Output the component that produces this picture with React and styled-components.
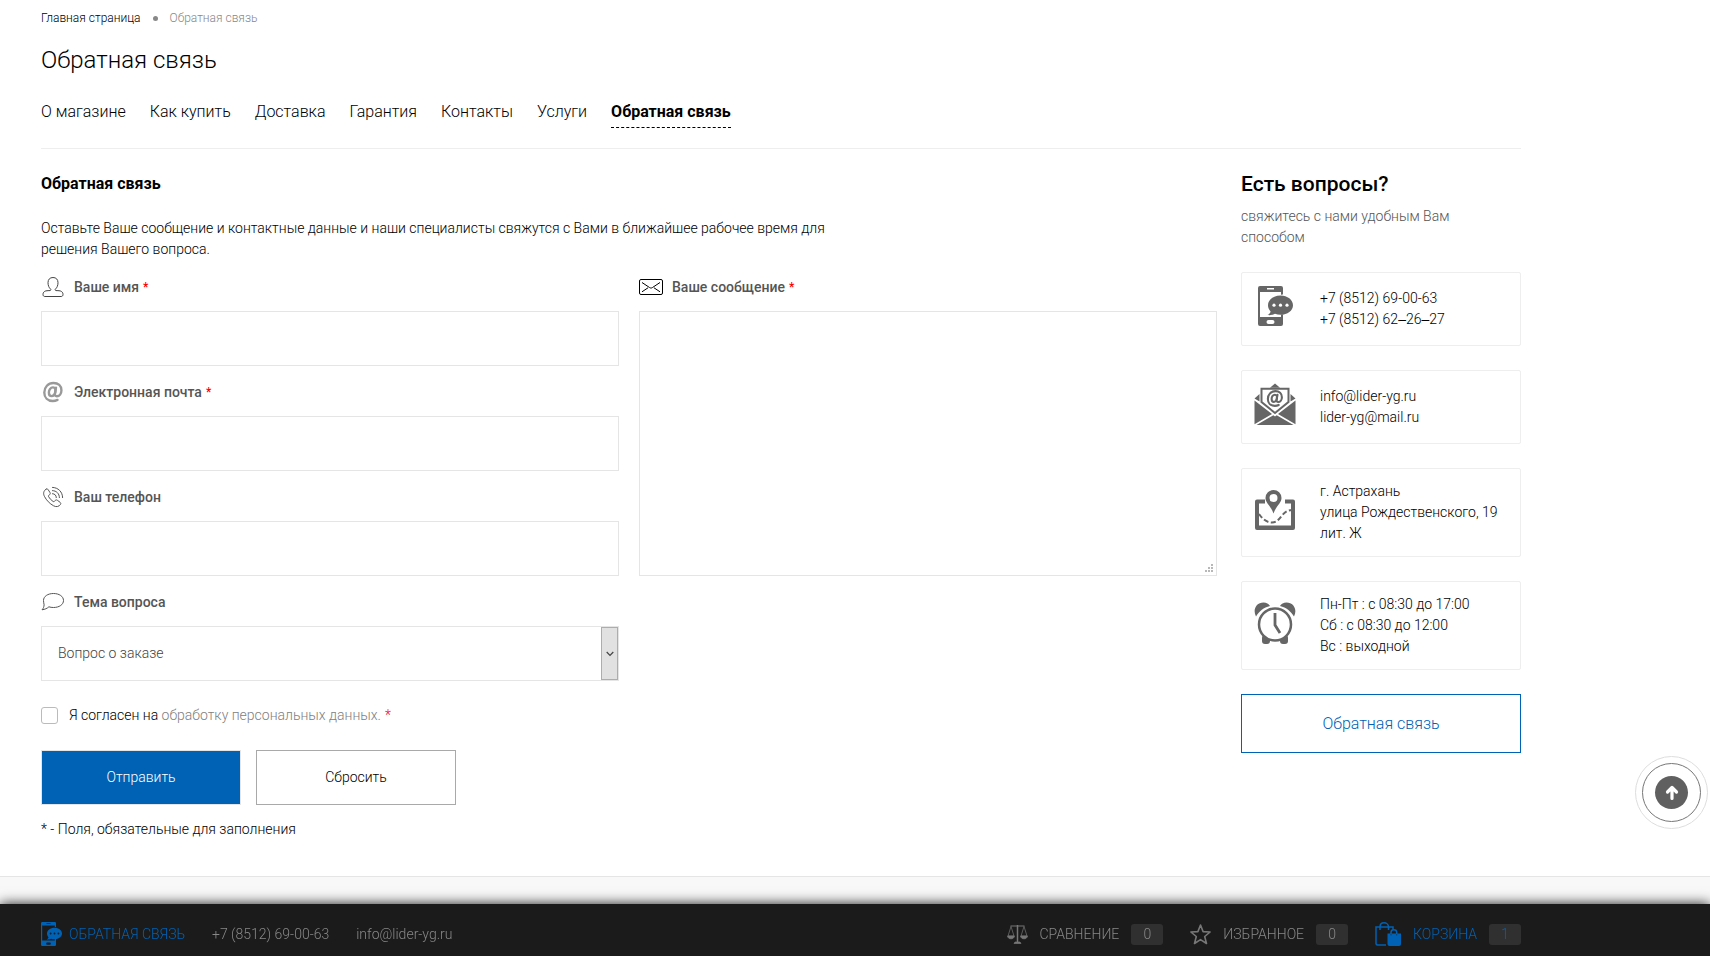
import React, { useState } from 'react';
import styled, { createGlobalStyle, css } from 'styled-components';

const BLUE = '#0062b5';
const GREY = '#666';

const GlobalStyle = createGlobalStyle`
    *, *::before, *::after {
        box-sizing: border-box;
    }

    body {
        margin: 0;
        background: #fff;
        color: #000;
        font-family: Roboto, 'Liberation Sans', sans-serif;
        font-size: 14px;
        font-weight: 300;
        line-height: 21px;
    }

    input, textarea, select, button {
        font: inherit;
    }

    a {
        color: inherit;
        text-decoration: none;
    }
`;

const Page = styled.div`
    display: flex;
    flex-flow: column nowrap;
    min-height: 100vh;
`;

const Container = styled.div`
    padding: 0 189px 0 41px;
`;

const Breadcrumbs = styled.nav`
    display: flex;
    align-items: center;
    gap: 12px;
    padding-top: 8px;
    font-size: 12px;
    line-height: 20px;
    color: #888;

    a {
        color: #000;
    }
`;

const Dot = styled.span`
    width: 5px;
    height: 5px;
    border-radius: 50%;
    background: #888;
`;

const PageTitle = styled.h1`
    margin: 16px 0 0;
    font-size: 24px;
    font-weight: 300;
    line-height: 32px;
`;

const Menu = styled.nav`
    display: flex;
    align-items: flex-start;
    gap: 24px;
    height: 49px;
    margin-top: 24px;
    border-bottom: 1px solid #eee;
    font-size: 16px;
    line-height: 24px;
`;

const MenuLink = styled.a`
    ${props => props.$active && css`
        padding-bottom: 3px;
        border-bottom: 1px dashed #000;
        font-weight: 700;
    `}
`;

const Columns = styled.div`
    display: grid;
    grid-template-columns: minmax(0, 1fr) 280px;
    gap: 24px;
    padding-top: 23px;
`;

const SectionTitle = styled.h2`
    margin: 0;
    font-size: 16px;
    font-weight: 700;
    line-height: 24px;
`;

const Intro = styled.p`
    max-width: 800px;
    margin: 22px 0 1px;
`;

const Form = styled.form`
    padding-bottom: 36px;
`;

const Fields = styled.div`
    display: grid;
    grid-template-columns: 1fr 1fr;
    gap: 20px;
    align-items: start;
`;

const FieldColumn = styled.div`
    display: flex;
    flex-flow: column nowrap;
`;

const FieldLabel = styled.label`
    display: flex;
    align-items: center;
    height: 50px;
    padding-top: 2px;
    font-weight: 500;
    color: #555;
`;

const LabelIcon = styled.span`
    display: flex;
    justify-content: center;
    width: 24px;
    margin-right: 9px;
`;

const Star = styled.span`
    margin-left: 4px;
    color: #f00;
    font-size: ${props => props.$small ? '12px' : 'inherit'};
`;

const inputLook = css`
    width: 100%;
    border: 1px solid #e5e5e5;
    border-radius: 0;
    background: #fff;
    color: #444;
    outline: none;
`;

const Input = styled.input`
    ${inputLook}
    height: 55px;
    padding: 0 16px;
`;

const Textarea = styled.textarea`
    ${inputLook}
    display: block;
    height: 265px;
    padding: 16px;
    resize: vertical;

    &::-webkit-resizer {
        background: url("data:image/svg+xml,%3Csvg xmlns='http://www.w3.org/2000/svg' width='15' height='15' fill='%23b8b8b8'%3E%3Cpath d='M4 10h2v2H4zM7 10h2v2H7zM10 10h2v2h-2zM7 7h2v2H7zM10 7h2v2h-2zM10 4h2v2h-2z'/%3E%3C/svg%3E") no-repeat;
    }
`;

const SelectBox = styled.div`
    display: grid;
    grid-template-columns: 1fr 17px;
    height: 55px;
    border: 1px solid #e5e5e5;
`;

const Select = styled.select`
    grid-area: 1 / 1 / 2 / 3;
    appearance: none;
    padding: 0 16px;
    border: 0;
    background: transparent;
    color: #444;
    outline: none;
`;

const SelectArrow = styled.span`
    grid-area: 1 / 2;
    display: flex;
    align-items: center;
    justify-content: center;
    border: 1px solid #adadad;
    background: #e1e1e1;
    pointer-events: none;
`;

const Agreement = styled.label`
    display: flex;
    align-items: center;
    margin-top: 24px;

    a {
        color: #808080;
    }
`;

const Checkbox = styled.input`
    appearance: none;
    width: 17px;
    height: 17px;
    margin: 0 11px 0 0;
    border: 1px solid #bbb;
    border-radius: 3px;
    background: #fff;

    &:checked {
        background: ${BLUE};
    }
`;

const Buttons = styled.div`
    display: flex;
    gap: 15px;
    margin-top: 24px;
`;

const Button = styled.button`
    width: 200px;
    height: 55px;
    border: 1px solid ${props => props.$primary ? '#e5e5e5' : '#a9a9a9'};
    background: ${props => props.$primary ? BLUE : '#fff'};
    color: ${props => props.$primary ? '#fff' : '#000'};
    cursor: pointer;
`;

const Note = styled.p`
    margin: 14px 0 0;
`;

const SideTitle = styled.h3`
    margin: 0;
    font-size: 21px;
    font-weight: 500;
    line-height: 24px;
`;

const SideText = styled.p`
    max-width: 240px;
    margin: 10px 0 24px;
    color: #555;
`;

const Cards = styled.div`
    display: flex;
    flex-flow: column nowrap;
    gap: 24px;
`;

const Card = styled.div`
    display: flex;
    align-items: center;
    min-height: 74px;
    padding: 12px 8px;
    border: 1px solid #eee;
    border-radius: 2px;
`;

const CardIcon = styled.span`
    display: flex;
    justify-content: center;
    width: 50px;
    margin-right: 20px;
    padding-bottom: 6px;
`;

const CardLines = styled.div`
    display: flex;
    flex-flow: column nowrap;
`;

const SideButton = styled.button`
    height: 59px;
    border: 1px solid ${BLUE};
    background: #fff;
    color: ${BLUE};
    font-size: 16px;
    cursor: pointer;
`;

const Footer = styled.footer`
    flex: 1 0 80px;
    border-top: 1px solid #e5e5e5;
    background: #f8f8f8;
`;

const BottomBar = styled.div`
    position: fixed;
    right: 0;
    bottom: 0;
    left: 0;
    display: flex;
    align-items: center;
    justify-content: space-between;
    height: 52px;
    padding: 8px 189px 0 41px;
    background: #1b1b1b;
    box-shadow: 0 0 12px rgba(0, 0, 0, .9);
    color: #888;
`;

const BarGroup = styled.div`
    display: flex;
    align-items: center;
    gap: 27px;
`;

const BarLink = styled.a`
    display: flex;
    align-items: center;
    gap: ${props => props.$gap || 0}px;
    color: ${props => props.$accent ? BLUE : '#888'};
    text-transform: ${props => props.$upper ? 'uppercase' : 'none'};
`;

const Count = styled.span`
    width: 32px;
    border-radius: 3px;
    background: #303030;
    text-align: center;
`;

const ToTop = styled.button`
    position: fixed;
    right: 2px;
    bottom: 127px;
    display: flex;
    padding: 0;
    border: 0;
    background: none;
    cursor: pointer;
`;

const PersonIcon = () => (
    <svg width="22" height="22" viewBox="0 0 22 22" fill="none" stroke="#444">
        <path d="M11 1.500c3.200 0 5 2 5 5.200 0 2.700-1 5-2.400 6.200-.8.700-.5 1.500.4 1.700 1.200.2 2.600-.2 4.200.3 1.800.5 2.800 1.800 2.800 3.500 0 1.500-.8 2.100-1.900 2.100H2.900C1.800 20.500 1 19.900 1 18.400c0-1.700 1-3 2.800-3.500 1.600-.5 3-.1 4.200-.3.900-.2 1.200-1 .4-1.700C7 11.700 6 9.400 6 6.700c0-3.200 1.800-5.200 5-5.200z" />
    </svg>
);

const AtIcon = ({ size = 22, color = '#999', width = 2.6 }) => (
    <svg width={ size } height={ size } viewBox="0 0 24 24" fill="none" stroke={ color } strokeWidth={ width } strokeLinecap="round">
        <path d="M15.300 7.200 14.200 13.500c-.4 2.400.5 3.200 2 3.200 2.900 0 5-2.900 5-6.500 0-4.900-3.500-8-8.700-8C6.700 2.200 2.500 6.700 2.500 12.500c0 5.600 3.700 9.300 9.200 9.300 2 0 3.700-.4 5.200-1.200" />
        <path d="M14.700 9.500c-.4-1.700-1.400-2.500-2.800-2.500-2.500 0-4.400 2.500-4.400 5.500 0 2.500 1.100 4 3 4 2 0 3.400-1.700 3.900-4z" />
    </svg>
);

const CallIcon = () => (
    <svg width="22" height="22" viewBox="0 0 22 22" fill="none" stroke="#555" strokeLinecap="round" strokeLinejoin="round">
        <path d="M4 3.200c-2.500 1.700-3 4.300-1.600 7.100 2 4 5.300 7.400 9.200 9.500 2.700 1.500 5.300.9 6.900-1.400.5-.8.3-1.500-.4-2.100l-2.700-2c-.8-.6-1.600-.5-2.200.2l-.7.8c-.4.5-.9.5-1.500.1-1.800-1.200-3.300-2.800-4.400-4.700-.3-.6-.3-1.100.2-1.400l.8-.6c.7-.6.9-1.300.4-2.100L6.200 3.700C5.700 2.900 4.800 2.700 4 3.200z" />
        <path d="M10.500 7.700c2.300.1 3.800 1.600 3.800 3.900M10.500 4.600c4 .1 6.900 3 6.900 7M10.500 1.400c5.700.1 10.100 4.500 10.100 10.200" />
    </svg>
);

const BubbleIcon = () => (
    <svg width="24" height="20" viewBox="0 0 24 20" fill="none" stroke="#555" strokeLinejoin="round">
        <path d="M12.500 1.500c5.700 0 10 2.900 10 7s-4.300 7-10 7c-1.700 0-3.200-.2-4.600-.7-1.700 1.600-4 2.600-6.900 3 1.300-1.300 2-3 2.100-5C2.900 11.600 2.500 10.100 2.500 8.500c0-4.100 4.300-7 10-7z" />
    </svg>
);

const EnvelopeIcon = () => (
    <svg width="24" height="16" viewBox="0 0 24 16" fill="none" stroke="#000">
        <rect x=".5" y=".5" width="23" height="15" rx="1.500" />
        <path d="M3 3.500l7.500 5c1 .7 2 .7 3 0l7.500-5M3 12.800l6-4M21 12.800l-6-4" />
    </svg>
);

const PhoneChatIcon = ({ width, height, color, hole }) => (
    <svg width={ width } height={ height } viewBox="0 0 35 40">
        <path fill={ color } fillRule="evenodd" d="M2 0h21a2 2 0 0 1 2 2v6.500c-1 0-1.500.2-2 .4V6H2v25h21v-2.500h2V38a2 2 0 0 1-2 2H2a2 2 0 0 1-2-2V2a2 2 0 0 1 2-2zM9 2v1.500h7V2zM10.500 34a2 2 0 0 0 0 4h4a2 2 0 0 0 0-4z" />
        <path fill={ color } d="M22.500 9.500C29.400 9.500 35 13.800 35 19.200s-5.600 9.600-12.500 9.600c-2 0-3.900-.3-5.500-1-2 1-4.600 1.600-7.500 1.200 1.600-.8 2.700-2 3.100-3.600-1.700-1.700-2.600-3.800-2.600-6.200 0-5.400 5.600-9.700 12.500-9.700z" />
        <g fill={ hole }>
            <circle cx="16" cy="19.200" r="1.600" />
            <circle cx="22.500" cy="19.200" r="1.600" />
            <circle cx="29" cy="19.200" r="1.600" />
        </g>
    </svg>
);

const MailIcon = () => (
    <svg width="42" height="42" viewBox="0 0 42 42">
        <g fill={ GREY }>
            <path d="M16 4.800 21 .5l5 4.300zM.5 15.500 5.500 11v7.500zM41.500 15.500l-5-4.500v7.500z" />
            <path d="M.5 17.500 18 31 .5 41.200zM41.500 17.500 24 31l17.500 10.200zM2.500 42 19.300 32.200l1.700 1.300 1.700-1.300L39.500 42z" />
            <path fillRule="evenodd" d="M6.500 4.800h29v14.700L21 31.200 6.500 19.500zM8.500 6.800v11.800L21 28.700l12.500-10.100V6.800z" />
        </g>
        <svg x="12" y="6.500" width="18" height="18">
            <AtIcon size={ 18 } color={ GREY } width={ 2.8 } />
        </svg>
    </svg>
);

const MapIcon = () => (
    <svg width="40" height="40" viewBox="0 0 40 40">
        <path fill={ GREY } d="M2 9.500h8v4H4v22h32v-22h-6v-4h8a2 2 0 0 1 2 2V38a2 2 0 0 1-2 2H2a2 2 0 0 1-2-2V11.500a2 2 0 0 1 2-2z" />
        <path fill={ GREY } fillRule="evenodd" d="M18.500 0a8 8 0 0 1 8 8c0 5-5.500 8-8 15.500C16 16 10.500 13 10.500 8a8 8 0 0 1 8-8zm0 4a4 4 0 1 0 0 8 4 4 0 0 0 0-8z" />
        <path d="M4 24c3.500 5 7.500 8.500 13 8.500 9 0 9-12 20-12.500" fill="none" stroke={ GREY } strokeWidth="2" strokeDasharray="5 2.500" />
    </svg>
);

const ClockIcon = () => (
    <svg width="42" height="42" viewBox="0 0 42 42">
        <g fill={ GREY }>
            <path d="M2 14.500C-1.500 8 2 .5 9.500.5c3 0 5.200 1.200 6.500 3.500C9.500 5.500 5.500 9 2 14.500zM40 14.500C43.500 8 40 .5 32.500.5c-3 0-5.200 1.200-6.500 3.500 6.500 1.500 10.500 5 14 10.500z" />
            <rect x="8" y="33" width="8" height="9" rx="3" />
            <rect x="26" y="33" width="8" height="9" rx="3" />
        </g>
        <circle cx="21" cy="22.500" r="16" fill="#fff" stroke={ GREY } strokeWidth="2.500" />
        <path d="M21 11v12l5 8" fill="none" stroke={ GREY } strokeWidth="2.800" />
    </svg>
);

const ScalesIcon = () => (
    <svg width="21" height="19" viewBox="0 0 21 19" fill="none" stroke="#777">
        <path d="M3.500 1h14" />
        <path d="M4 1.500 1 11h6L4 1.500zM17 1.500 14 11h6L17 1.500z" strokeWidth=".7" />
        <path d="M10.500 0v17" strokeWidth="1.500" />
        <path fill="#777" strokeWidth=".7" d="M.5 11h7c-.3 1.900-1.600 2.800-3.500 2.800S.8 12.900.5 11zM13.500 11h7c-.3 1.900-1.600 2.800-3.500 2.800s-3.200-.9-3.500-2.800zM7 18.500l1-1.500h5l1 1.500z" />
    </svg>
);

const StarIcon = () => (
    <svg width="21" height="21" viewBox="0 0 21 21" fill="none" stroke="#777" strokeWidth="1.600" strokeLinejoin="round">
        <path d="M10.500 1l2.600 6.600 7 .4-5.400 4.500 1.800 7-6-3.900-6 3.900 1.800-7L.9 8l7-.4z" />
    </svg>
);

const BagsIcon = () => (
    <svg width="26" height="24" viewBox="0 0 26 24" fill="none" stroke={ BLUE }>
        <path strokeWidth="1.500" d="M11 23H2.500C1.500 23 1 22.300 1 21.500V5h17v2.500M5 8V5c0-2.500 1.600-4.200 4-4.200s4.500 1.700 4.500 4.200v3" />
        <path strokeWidth="1.500" d="M16 13v-2.500c0-1.500 1-2.700 2.800-2.700s2.900 1.200 2.900 2.700V13" />
        <path fill={ BLUE } stroke="none" d="M12.500 11.500H26V22a2 2 0 0 1-2 2h-9.500a2 2 0 0 1-2-2z" />
        <path stroke="#1b1b1b" strokeWidth=".5" d="M16 12v1.500M21.700 12v1.500" />
    </svg>
);

const ArrowUpIcon = () => (
    <svg width="73" height="73" viewBox="0 0 73 73" fill="none">
        <circle cx="36.500" cy="36.500" r="36" fill="#fff" stroke="#ddd" />
        <circle cx="36.500" cy="36.500" r="29" stroke="#777" />
        <circle cx="36.500" cy="36.500" r="16.500" fill="#606060" />
        <path d="M37 42.500V32M32.500 36l4.500-4.500 4.500 4.500" stroke="#fff" strokeWidth="3.200" strokeLinecap="round" strokeLinejoin="round" />
    </svg>
);

const menu = ['О магазине', 'Как купить', 'Доставка', 'Гарантия', 'Контакты', 'Услуги', 'Обратная связь'];

const textFields = [
    { name: 'name', type: 'text', label: 'Ваше имя', icon: <PersonIcon />, required: true },
    { name: 'email', type: 'email', label: 'Электронная почта', icon: <AtIcon />, required: true },
    { name: 'phone', type: 'tel', label: 'Ваш телефон', icon: <CallIcon /> }
];

const contacts = [
    { icon: <PhoneChatIcon width="35" height="40" color={ GREY } hole="#fff" />, lines: ['+7 (8512) 69-00-63', '+7 (8512) 62‒26‒27'] },
    { icon: <MailIcon />, lines: ['info@lider-yg.ru', 'lider-yg@mail.ru'] },
    { icon: <MapIcon />, lines: ['г. Астрахань', 'улица Рождественского, 19', 'лит. Ж'] },
    { icon: <ClockIcon />, lines: ['Пн-Пт : с 08:30 до 17:00', 'Сб : с 08:30 до 12:00', 'Вс : выходной'] }
];

const Label = ({ id, icon, required, children }) => (
    <FieldLabel htmlFor={ id }>
        <LabelIcon>{ icon }</LabelIcon>
        { children }
        { required && <Star $small>*</Star> }
    </FieldLabel>
);

function FeedbackForm() {
    const [values, setValues] = useState({ name: '', email: '', phone: '', message: '', topic: 'order' });

    const handleChange = (e) => setValues({ ...values, [e.target.name]: e.target.value });

    return (
        <Form onSubmit={ (e) => e.preventDefault() }>
            <SectionTitle>Обратная связь</SectionTitle>
            <Intro>
                Оставьте Ваше сообщение и контактные данные и наши специалисты свяжутся с Вами в ближайшее рабочее время для решения Вашего вопроса.
            </Intro>
            <Fields>
                <FieldColumn>
                    {
                        textFields.map(field => (
                            <React.Fragment key={ field.name }>
                                <Label id={ field.name } icon={ field.icon } required={ field.required }>{ field.label }</Label>
                                <Input
                                 id={ field.name }
                                 name={ field.name }
                                 type={ field.type }
                                 value={ values[field.name] }
                                 onChange={ handleChange }
                                />
                            </React.Fragment>
                        ))
                    }
                    <Label id="topic" icon={ <BubbleIcon /> }>Тема вопроса</Label>
                    <SelectBox>
                        <Select id="topic" name="topic" value={ values.topic } onChange={ handleChange }>
                            <option value="order">Вопрос о заказе</option>
                        </Select>
                        <SelectArrow>
                            <svg width="8" height="6" viewBox="0 0 8 6" fill="none" stroke="#444" strokeWidth="1.200">
                                <path d="M.7 1 4 4.500 7.300 1" />
                            </svg>
                        </SelectArrow>
                    </SelectBox>
                </FieldColumn>
                <FieldColumn>
                    <Label id="message" icon={ <EnvelopeIcon /> } required>Ваше сообщение</Label>
                    <Textarea id="message" name="message" value={ values.message } onChange={ handleChange } />
                </FieldColumn>
            </Fields>
            <Agreement>
                <Checkbox type="checkbox" name="agreement" />
                <span>Я согласен на <a href="#agreement">обработку персональных данных.</a></span>
                <Star>*</Star>
            </Agreement>
            <Buttons>
                <Button type="submit" $primary>Отправить</Button>
                <Button type="reset">Сбросить</Button>
            </Buttons>
            <Note>* - Поля, обязательные для заполнения</Note>
        </Form>
    );
}

export default function App() {
    return (
        <Page>
            <GlobalStyle />
            <Container>
                <Breadcrumbs>
                    <a href="#home">Главная страница</a>
                    <Dot />
                    <span>Обратная связь</span>
                </Breadcrumbs>
                <PageTitle>Обратная связь</PageTitle>
                <Menu>
                    {
                        menu.map((item, i) => (
                            <MenuLink key={ item } href="#menu" $active={ i === menu.length - 1 }>{ item }</MenuLink>
                        ))
                    }
                </Menu>
                <Columns>
                    <FeedbackForm />
                    <aside>
                        <SideTitle>Есть вопросы?</SideTitle>
                        <SideText>свяжитесь с нами удобным Вам способом</SideText>
                        <Cards>
                            {
                                contacts.map(card => (
                                    <Card key={ card.lines[0] }>
                                        <CardIcon>{ card.icon }</CardIcon>
                                        <CardLines>
                                            { card.lines.map(line => <span key={ line }>{ line }</span>) }
                                        </CardLines>
                                    </Card>
                                ))
                            }
                            <SideButton type="button">Обратная связь</SideButton>
                        </Cards>
                    </aside>
                </Columns>
            </Container>
            <Footer />
            <ToTop type="button" aria-label="Наверх" onClick={ () => window.scrollTo(0, 0) }>
                <ArrowUpIcon />
            </ToTop>
            <BottomBar>
                <BarGroup>
                    <BarLink href="#callback" $accent $upper $gap={ 7 }>
                        <PhoneChatIcon width="21" height="24" color={ BLUE } hole="#1b1b1b" />
                        Обратная связь
                    </BarLink>
                    <BarLink href="tel:+78512690063">+7 (8512) 69-00-63</BarLink>
                    <BarLink href="mailto:info@lider-yg.ru">info@lider-yg.ru</BarLink>
                </BarGroup>
                <BarGroup>
                    <BarLink href="#compare" $upper $gap={ 12 }>
                        <ScalesIcon />
                        Сравнение
                        <Count>0</Count>
                    </BarLink>
                    <BarLink href="#wishlist" $upper $gap={ 12 }>
                        <StarIcon />
                        Избранное
                        <Count>0</Count>
                    </BarLink>
                    <BarLink href="#cart" $accent $upper $gap={ 12 }>
                        <BagsIcon />
                        Корзина
                        <Count>1</Count>
                    </BarLink>
                </BarGroup>
            </BottomBar>
        </Page>
    );
}
